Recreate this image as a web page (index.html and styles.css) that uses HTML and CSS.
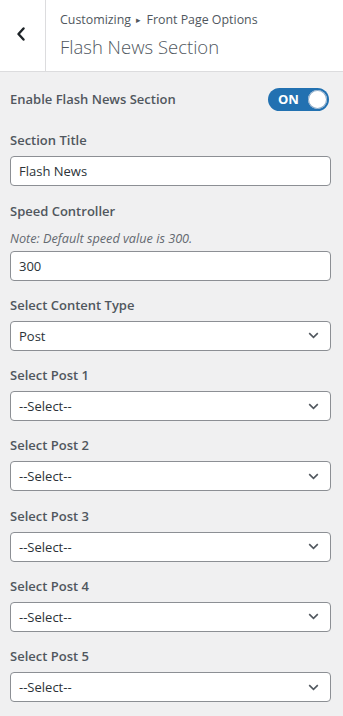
FILE: index.html
```html
<!DOCTYPE html>
<html lang="en">
<head>
<meta charset="utf-8">
<title>Flash News Section</title>
<link rel="stylesheet" href="styles.css">
</head>
<body>
<div class="panel">
  <header class="head">
    <button class="back" aria-label="Back">
      <svg width="10" height="14" viewBox="0 0 10 14"><path d="M7.5 1.5 L2.5 7 L7.5 12.5" fill="none" stroke="#1d2327" stroke-width="2.4" stroke-linecap="round" stroke-linejoin="round"/></svg>
    </button>
    <div class="head-text">
      <div class="crumb">Customizing <span class="tri">&#9656;</span> Front Page Options</div>
      <h1 class="title">Flash News Section</h1>
    </div>
  </header>

  <main class="controls">
    <div class="toggle-row">
      <span class="label">Enable Flash News Section</span>
      <span class="toggle"><span class="on">ON</span><span class="knob"></span></span>
    </div>

    <div class="block">
      <span class="label">Section Title</span>
      <div class="field">Flash News</div>
    </div>

    <div class="block">
      <span class="label">Speed Controller</span>
      <span class="note">Note: Default speed value is 300.</span>
      <div class="field">300</div>
    </div>

    <div class="block">
      <span class="label">Select Content Type</span>
      <div class="field select"><span>Post</span><svg width="11" height="7" viewBox="0 0 11 7"><path d="M1.2 1.2 L5.5 5.3 L9.8 1.2" fill="none" stroke="#50575e" stroke-width="1.6"/></svg></div>
    </div>

    <div class="block">
      <span class="label">Select Post 1</span>
      <div class="field select"><span>--Select--</span><svg width="11" height="7" viewBox="0 0 11 7"><path d="M1.2 1.2 L5.5 5.3 L9.8 1.2" fill="none" stroke="#50575e" stroke-width="1.6"/></svg></div>
    </div>

    <div class="block">
      <span class="label">Select Post 2</span>
      <div class="field select"><span>--Select--</span><svg width="11" height="7" viewBox="0 0 11 7"><path d="M1.2 1.2 L5.5 5.3 L9.8 1.2" fill="none" stroke="#50575e" stroke-width="1.6"/></svg></div>
    </div>

    <div class="block">
      <span class="label">Select Post 3</span>
      <div class="field select"><span>--Select--</span><svg width="11" height="7" viewBox="0 0 11 7"><path d="M1.2 1.2 L5.5 5.3 L9.8 1.2" fill="none" stroke="#50575e" stroke-width="1.6"/></svg></div>
    </div>

    <div class="block">
      <span class="label">Select Post 4</span>
      <div class="field select"><span>--Select--</span><svg width="11" height="7" viewBox="0 0 11 7"><path d="M1.2 1.2 L5.5 5.3 L9.8 1.2" fill="none" stroke="#50575e" stroke-width="1.6"/></svg></div>
    </div>

    <div class="block">
      <span class="label">Select Post 5</span>
      <div class="field select"><span>--Select--</span><svg width="11" height="7" viewBox="0 0 11 7"><path d="M1.2 1.2 L5.5 5.3 L9.8 1.2" fill="none" stroke="#50575e" stroke-width="1.6"/></svg></div>
    </div>
  </main>
</div>
</body>
</html>
```

FILE: styles.css
```css
* { box-sizing: border-box; }
html, body { margin: 0; padding: 0; }
body {
  background: #f0f0f1;
  font-family: "Open Sans", "Noto Sans", sans-serif;
  color: #50575e;
  width: 343px;
  height: 716px;
  overflow: hidden;
}
.head {
  display: flex;
  height: 72px;
  background: #fff;
  border-bottom: 1px solid #dcdcde;
}
.back {
  width: 46px;
  flex: none;
  border: 0;
  border-right: 1px solid #dcdcde;
  background: #fff;
  display: flex;
  align-items: center;
  justify-content: center;
  padding: 0 4px 4px 0;
}
.head-text {
  padding: 11px 0 0 14px;
  display: flex;
  flex-direction: column;
}
.crumb {
  font-size: 12.4px;
  line-height: 18px;
  color: #50575e;
}
.tri { font-size: 9px; margin: 0 2px; position: relative; top: -1px; }
.title {
  margin: 4px 0 0;
  font-size: 18.5px;
  line-height: 26px;
  font-weight: 300;
  color: #50575e;
}
.controls {
  display: flex;
  flex-direction: column;
  padding: 15px 12px 0 10px;
  gap: 14.25px;
}
.toggle-row {
  display: flex;
  justify-content: space-between;
  align-items: center;
  height: 24px;
  margin-bottom: 5px;
}
.label {
  font-size: 13px;
  font-weight: 560;
  line-height: 20px;
  color: #50575e;
}
.toggle {
  display: flex;
  align-items: center;
  justify-content: space-between;
  width: 61px;
  height: 23px;
  margin-right: 2px;
  border-radius: 12px;
  background: #2271b1;
  padding: 0 2px 0 10px;
}
.on {
  color: #fff;
  font-size: 13px;
  font-weight: 700;
  line-height: 1;
}
.knob {
  width: 19px;
  height: 19px;
  border-radius: 50%;
  background: #fff;
  box-shadow: inset 0 0 0 1px #8aa9c7;
}
.block {
  display: flex;
  flex-direction: column;
}
.block .label { margin-bottom: 6px; }
.note {
  font-size: 12.7px;
  font-style: italic;
  line-height: 18px;
  color: #646970;
  margin: 2px 0 4px;
}
.field {
  height: 30px;
  border: 1px solid #8c8f94;
  border-radius: 4px;
  background: #fff;
  font-size: 13px;
  line-height: 28px;
  color: #2c3338;
  padding: 0 8px;
}
.select {
  display: flex;
  justify-content: space-between;
  align-items: center;
  padding: 0 8px 0 8px;
}
.select svg { margin-right: 3px; }
```
